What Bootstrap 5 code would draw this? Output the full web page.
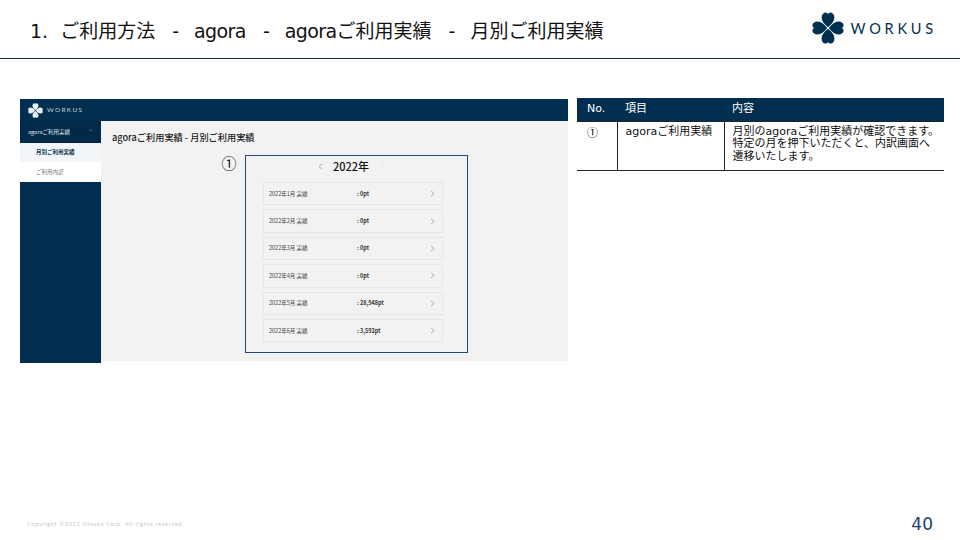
<!DOCTYPE html>
<html lang="ja">
<head>
<meta charset="utf-8">
<title>agoraご利用実績</title>
<link href="https://cdn.jsdelivr.net/npm/bootstrap@5.3.0/dist/css/bootstrap.min.css" rel="stylesheet">
<style>
:root{--navy:#022f4f;}
html,body{margin:0;background:#fff;}
body{font-family:"DejaVu Sans","Noto Sans CJK JP",sans-serif;}
.slide{width:960px;height:540px;overflow:hidden;}
.slide-head{height:59px;border-bottom:1px solid #0f2a3f;padding-left:30px;padding-right:23px;}
.slide-title{font-size:19px;line-height:1;margin:0;padding-top:4px;font-weight:400;color:#111;white-space:pre;font-family:"DejaVu Sans","Noto Sans CJK JP",sans-serif;}
.title-latin{letter-spacing:-.6px;}
.title-sep{margin:0 15px 0 17px;}
.brand-word{font-family:"Lato",sans-serif;font-weight:400;color:var(--navy);font-size:14.5px;letter-spacing:3.8px;}
.brand-mark{margin-top:-2px;margin-right:-1px;}
.slide-main{padding:40px 16px 0 20px;gap:9px;height:449px;}
.shot{width:548px;height:264px;}
.shot-top{height:22px;background:var(--navy);padding-left:8px;}
.shot-word{font-family:"Lato",sans-serif;color:#cfd8df;font-size:6.5px;letter-spacing:1.3px;}
.shot-side{width:81px;background:var(--navy);}
.side-head{height:22px;background:#01294a;color:#dfe6ec;font-size:5.5px;padding:0 8px;font-family:"Noto Sans CJK JP",sans-serif;}
.side-on{height:19px;background:#f2f5f9;color:#17324a;font-size:5.5px;font-weight:700;padding-left:16px;font-family:"Noto Sans CJK JP",sans-serif;}
.side-off{height:20px;background:#fff;color:#777;font-size:5.5px;padding-left:16px;font-family:"Noto Sans CJK JP",sans-serif;}
.shot-body{background:#f2f2f2;height:240px;padding:10px 0 0 11px;}
.shot-h{font-family:"Noto Sans CJK JP",sans-serif;font-size:9.2px;font-weight:500;color:#222;line-height:13px;margin:0 0 11px;}
.shot-lower{padding-left:110px;}
.num-mark{font-family:"Noto Sans CJK JP",sans-serif;font-size:15px;line-height:18px;color:#111;width:24px;margin:-1px 4px 0 -5px;text-align:center;}
.year-box{width:223px;height:198px;border:1px solid #1a4a80;padding-top:3px;}
.year-bar{height:15px;gap:10px;margin-bottom:8px;padding-right:11px;}
.year-txt{font-family:"Noto Sans CJK JP",sans-serif;font-size:11px;font-weight:500;color:#111;line-height:15px;}
.year-arrow{color:#999;}
.year-arrow-off{color:#e3e3e3;}
.month-list{width:180px;margin-left:17px;gap:4px;}
.month-row{height:23.4px;border:1px solid #e6e6e6;background:#f2f2f2;font-family:"Noto Sans CJK JP",sans-serif;font-size:5.5px;color:#444;padding:0 7px 0 5px;}
.m-label{width:88px;}
.m-val{font-weight:700;color:#333;}
.m-arrow{color:#999;line-height:1;}
.note-wrap{width:367px;margin-top:-1px;}
.note-table{font-size:11px;line-height:12.7px;color:#111;margin:0;border-collapse:collapse;table-layout:fixed;width:367px;font-family:"DejaVu Sans","Noto Sans CJK JP",sans-serif;}
.note-table th{background:var(--navy);color:#fff;font-weight:400;height:23px;padding:0 8px;vertical-align:middle;border:0;}
.note-table th:first-child{padding-left:10px;}
.note-table td{padding:4px 0 0 8px;height:49px;vertical-align:top;border-bottom:1.5px solid #222;border-right:1px solid #222;border-top:1px solid #222;white-space:nowrap;}
.note-table td:last-child{border-right:0;}
.note-table td.note-num{padding-left:10px;font-family:"Noto Sans CJK JP",sans-serif;color:#000;}
.foot-copy{font-family:"Lato",sans-serif;font-size:5.5px;letter-spacing:.72px;color:#c4c4c4;}
.slide-foot{height:32px;padding:0 27px 0 27px;}
.page-no{font-family:"DejaVu Sans",sans-serif;font-size:17px;color:#1f4268;margin-top:1px;}
</style>
</head>
<body>
<div class="slide d-flex flex-column">
  <header class="slide-head d-flex align-items-center justify-content-between">
    <h1 class="slide-title">1.  ご利用方法<span class="title-sep">-</span><span class="title-latin">agora</span><span class="title-sep">-</span><span class="title-latin">agora</span>ご利用実績<span class="title-sep">-</span>月別ご利用実績</h1>
    <div class="d-flex align-items-center gap-2">
      <svg class="brand-mark" width="32" height="32" viewBox="0 0 32 32" aria-hidden="true">
        <g fill="#022f4f">
          <path d="M16 15.2C12 12 9.6 9 9.6 5.6 9.6 2.4 11.6.4 13.6.4 15 .4 16 1.4 16 2.6 16 1.4 17 .4 18.4.4 20.4.4 22.4 2.4 22.4 5.6 22.4 9 20 12 16 15.2Z"/>
          <path transform="rotate(90 16 16)" d="M16 15.2C12 12 9.6 9 9.6 5.6 9.6 2.4 11.6.4 13.6.4 15 .4 16 1.4 16 2.6 16 1.4 17 .4 18.4.4 20.4.4 22.4 2.4 22.4 5.6 22.4 9 20 12 16 15.2Z"/>
          <path transform="rotate(180 16 16)" d="M16 15.2C12 12 9.6 9 9.6 5.6 9.6 2.4 11.6.4 13.6.4 15 .4 16 1.4 16 2.6 16 1.4 17 .4 18.4.4 20.4.4 22.4 2.4 22.4 5.6 22.4 9 20 12 16 15.2Z"/>
          <path transform="rotate(270 16 16)" d="M16 15.2C12 12 9.6 9 9.6 5.6 9.6 2.4 11.6.4 13.6.4 15 .4 16 1.4 16 2.6 16 1.4 17 .4 18.4.4 20.4.4 22.4 2.4 22.4 5.6 22.4 9 20 12 16 15.2Z"/>
        </g>
      </svg>
      <span class="brand-word">WORKUS</span>
    </div>
  </header>

  <main class="slide-main d-flex align-items-start">
    <section class="shot d-flex flex-column">
      <div class="shot-top d-flex align-items-center gap-1">
        <svg width="15" height="15" viewBox="0 0 32 32" aria-hidden="true">
          <g fill="#e8edf1">
            <path d="M16 15.2C12 12 9.6 9 9.6 5.6 9.6 2.4 11.6.4 13.6.4 15 .4 16 1.4 16 2.6 16 1.4 17 .4 18.4.4 20.4.4 22.4 2.4 22.4 5.6 22.4 9 20 12 16 15.2Z"/>
            <path transform="rotate(90 16 16)" d="M16 15.2C12 12 9.6 9 9.6 5.6 9.6 2.4 11.6.4 13.6.4 15 .4 16 1.4 16 2.6 16 1.4 17 .4 18.4.4 20.4.4 22.4 2.4 22.4 5.6 22.4 9 20 12 16 15.2Z"/>
            <path transform="rotate(180 16 16)" d="M16 15.2C12 12 9.6 9 9.6 5.6 9.6 2.4 11.6.4 13.6.4 15 .4 16 1.4 16 2.6 16 1.4 17 .4 18.4.4 20.4.4 22.4 2.4 22.4 5.6 22.4 9 20 12 16 15.2Z"/>
            <path transform="rotate(270 16 16)" d="M16 15.2C12 12 9.6 9 9.6 5.6 9.6 2.4 11.6.4 13.6.4 15 .4 16 1.4 16 2.6 16 1.4 17 .4 18.4.4 20.4.4 22.4 2.4 22.4 5.6 22.4 9 20 12 16 15.2Z"/>
          </g>
        </svg>
        <span class="shot-word">WORKUS</span>
      </div>
      <div class="d-flex flex-grow-1">
        <nav class="shot-side">
          <div class="side-head d-flex align-items-center justify-content-between"><span>agoraご利用実績</span><span class="opacity-50">⌃</span></div>
          <div class="side-on d-flex align-items-center">月別ご利用実績</div>
          <div class="side-off d-flex align-items-center">ご利用内訳</div>
        </nav>
        <div class="shot-body flex-grow-1">
          <h2 class="shot-h">agoraご利用実績 - 月別ご利用実績</h2>
          <div class="shot-lower d-flex align-items-start">
            <div class="num-mark">①</div>
            <div class="year-box flex-shrink-0">
              <div class="year-bar d-flex align-items-center justify-content-center">
                <svg class="year-arrow" width="5" height="7" viewBox="0 0 5 7" aria-hidden="true"><path d="M4 .8 1 3.5 4 6.2" fill="none" stroke="currentColor" stroke-width=".8"/></svg><span class="year-txt">2022年</span><svg class="year-arrow-off" width="5" height="7" viewBox="0 0 5 7" aria-hidden="true"><path d="M1 .8 4 3.5 1 6.2" fill="none" stroke="currentColor" stroke-width=".8"/></svg>
              </div>
              <div class="month-list d-flex flex-column">
                <div class="month-row d-flex align-items-center"><span class="m-label">2022年1月 実績</span><span class="m-val flex-grow-1">: 0pt</span><svg class="m-arrow" width="5" height="7" viewBox="0 0 5 7" aria-hidden="true"><path d="M1 .8 4 3.5 1 6.2" fill="none" stroke="currentColor" stroke-width=".8"/></svg></div>
                <div class="month-row d-flex align-items-center"><span class="m-label">2022年2月 実績</span><span class="m-val flex-grow-1">: 0pt</span><svg class="m-arrow" width="5" height="7" viewBox="0 0 5 7" aria-hidden="true"><path d="M1 .8 4 3.5 1 6.2" fill="none" stroke="currentColor" stroke-width=".8"/></svg></div>
                <div class="month-row d-flex align-items-center"><span class="m-label">2022年3月 実績</span><span class="m-val flex-grow-1">: 0pt</span><svg class="m-arrow" width="5" height="7" viewBox="0 0 5 7" aria-hidden="true"><path d="M1 .8 4 3.5 1 6.2" fill="none" stroke="currentColor" stroke-width=".8"/></svg></div>
                <div class="month-row d-flex align-items-center"><span class="m-label">2022年4月 実績</span><span class="m-val flex-grow-1">: 0pt</span><svg class="m-arrow" width="5" height="7" viewBox="0 0 5 7" aria-hidden="true"><path d="M1 .8 4 3.5 1 6.2" fill="none" stroke="currentColor" stroke-width=".8"/></svg></div>
                <div class="month-row d-flex align-items-center"><span class="m-label">2022年5月 実績</span><span class="m-val flex-grow-1">: 28,948pt</span><svg class="m-arrow" width="5" height="7" viewBox="0 0 5 7" aria-hidden="true"><path d="M1 .8 4 3.5 1 6.2" fill="none" stroke="currentColor" stroke-width=".8"/></svg></div>
                <div class="month-row d-flex align-items-center"><span class="m-label">2022年6月 実績</span><span class="m-val flex-grow-1">: 3,592pt</span><svg class="m-arrow" width="5" height="7" viewBox="0 0 5 7" aria-hidden="true"><path d="M1 .8 4 3.5 1 6.2" fill="none" stroke="currentColor" stroke-width=".8"/></svg></div>
              </div>
            </div>
          </div>
        </div>
      </div>
    </section>

    <section class="note-wrap">
      <table class="note-table">
        <colgroup><col style="width:40px"><col style="width:107px"><col style="width:220px"></colgroup>
        <thead><tr><th>No.</th><th>項目</th><th>内容</th></tr></thead>
        <tbody><tr><td class="note-num">①</td><td>agoraご利用実績</td><td>月別のagoraご利用実績が確認できます。<br>特定の月を押下いただくと、内訳画面へ<br>遷移いたします。</td></tr></tbody>
      </table>
    </section>
  </main>

  <footer class="slide-foot d-flex align-items-center justify-content-between">
    <span class="foot-copy">Copyright ©2022 Otsuka Corp. All rights reserved.</span>
    <span class="page-no">40</span>
  </footer>
</div>
</body>
</html>
